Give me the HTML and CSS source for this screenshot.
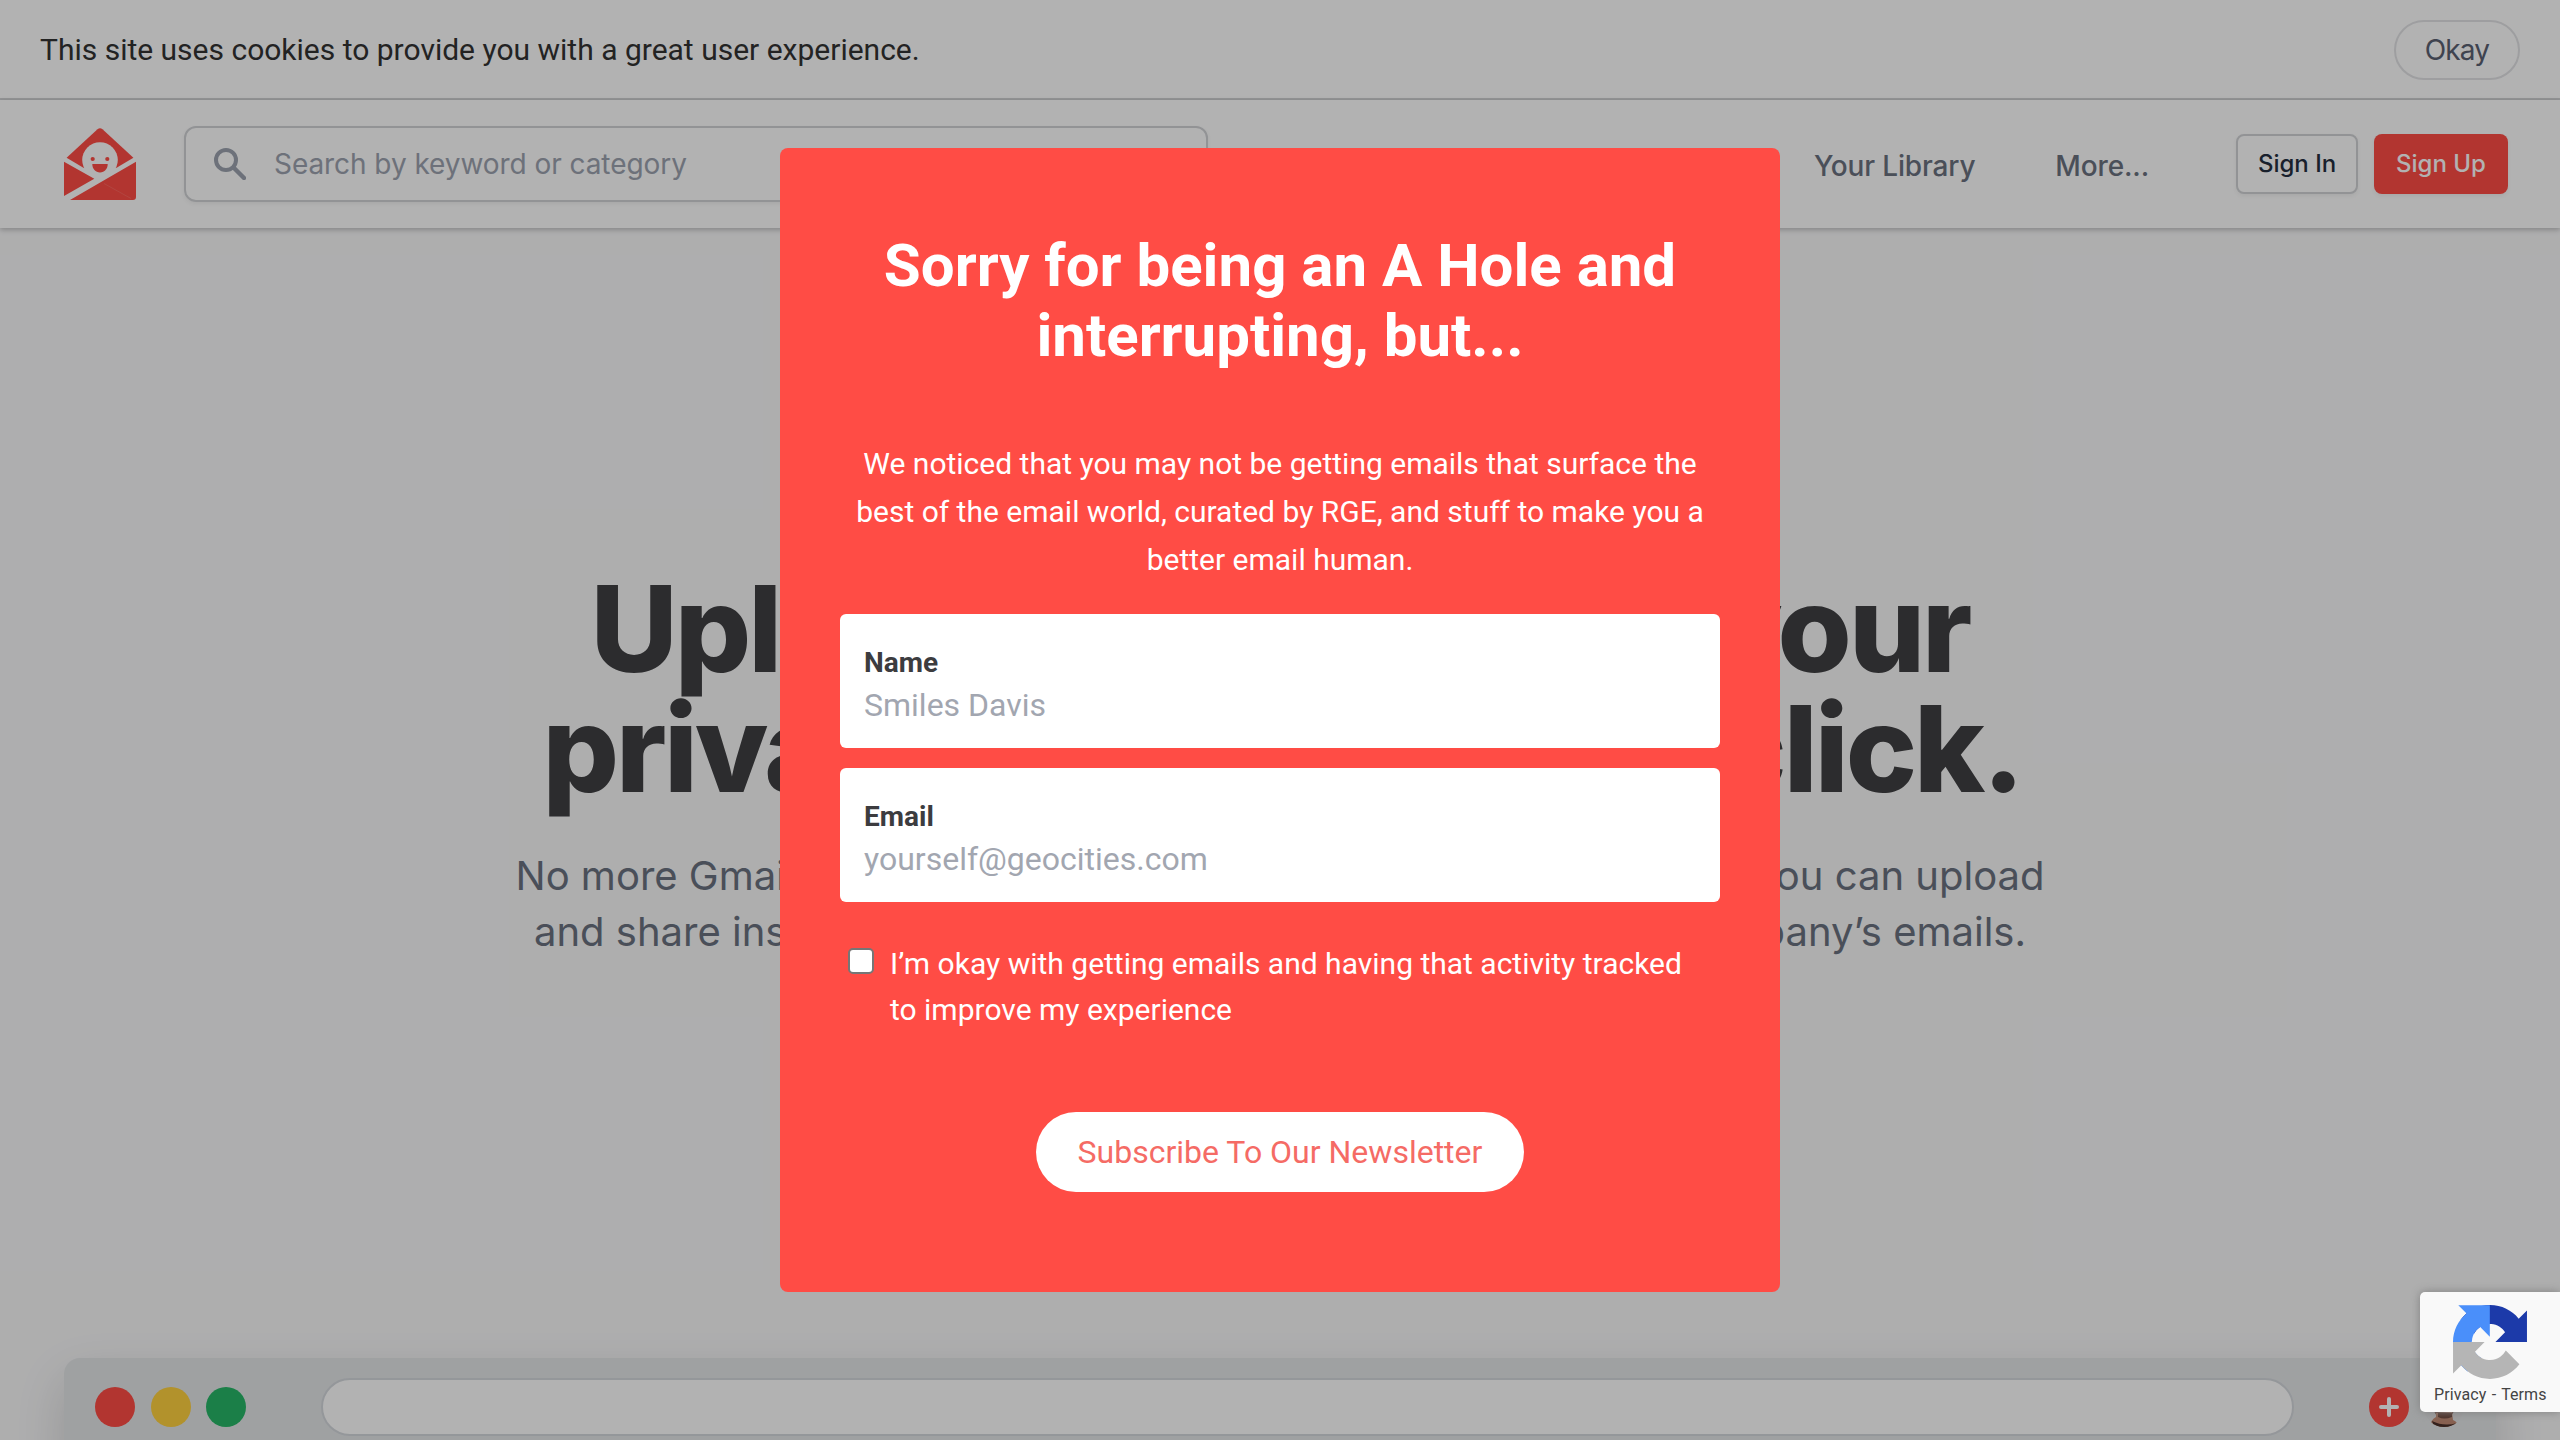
FILE: index.html
```html
<!DOCTYPE html>
<html lang="en">
<head>
<meta charset="utf-8">
<title>Really Good Emails</title>
<link rel="stylesheet" href="styles.css">
</head>
<body>
<div class="page">
  <div class="cookie-bar">
    <span class="cookie-text">This site uses cookies to provide you with a great user experience.</span>
    <button class="okay">Okay</button>
  </div>
  <header class="header">
    <svg class="logo" viewBox="0 0 72 72">
      <path d="M33.5 1.3Q36 -.9 38.5 1.3L69.4 29.7 52.6 39.8 36 44 19.4 39.8 2.6 29.7Z" fill="#ff4c45"/>
      <circle cx="36" cy="32" r="17.8" fill="#fff"/>
      <path d="M0 33.7 30.3 50.8 0 68ZM72 33.7V69Q72 72 69 72H6Z" fill="#ff4c45"/>
      <path d="M40 55.5 67 70.5" stroke="#ff7a72" stroke-width=".5" fill="none"/>
      <circle cx="28.7" cy="31" r="2.1" fill="#ff4c45"/>
      <circle cx="43.3" cy="31" r="2.1" fill="#ff4c45"/>
      <path d="M28.3 36H43.7C43.7 41 40.5 44.4 36 44.4S28.3 41 28.3 36Z" fill="#ff4c45"/>
    </svg>
    <div class="search">
      <svg class="search-icon" viewBox="0 0 32 32"><circle cx="12" cy="12" r="10" fill="none" stroke="#9ca3af" stroke-width="4"/><path d="M19.5 19.5 30 30" stroke="#9ca3af" stroke-width="4.4" stroke-linecap="round"/></svg>
      <span class="search-text">Search by keyword or category</span>
    </div>
    <nav class="nav">
      <a class="nav-link library">Your Library</a>
      <a class="nav-link more">More...</a>
      <button class="btn sign-in">Sign In</button>
      <button class="btn sign-up">Sign Up</button>
    </nav>
  </header>
  <main class="hero">
    <h1 class="hero-title"><span class="title-a"><span>Upload</span><span>your</span></span><span class="title-b"><span>private</span><span>click.</span></span></h1>
    <p class="hero-sub"><span class="sub-a"><span>No more Gmail</span><span>you can upload</span></span><span class="sub-b"><span>and share inspiration</span><span>company’s emails.</span></span></p>
  </main>
  <section class="browser">
    <div class="dots"><i class="dot red"></i><i class="dot yellow"></i><i class="dot green"></i></div>
    <div class="address"></div>
    <svg class="plus" viewBox="0 0 40 40"><circle cx="20" cy="20" r="20" fill="#ff4c45"/><path d="M20 12V28M12 20H28" stroke="#fff" stroke-width="4" stroke-linecap="round"/></svg>
    <svg class="avatar" viewBox="0 0 40 40"><clipPath id="face"><circle cx="20" cy="20" r="20"/></clipPath><g clip-path="url(#face)"><rect width="40" height="40" fill="#e2e4e6"/><ellipse cx="20" cy="18" rx="11" ry="14" fill="#7a5246"/><path d="M12 26 28 25 29 33Q34 35 35 40H6Q7 32 12 30Z" fill="#c28a73"/><path d="M14 26H28V30Q20 33 14 30Z" fill="#6b4337"/><path d="M8 34Q20 40 33 36L31 40H10Z" fill="#4a302a"/></g></svg>
  </section>
</div>
<div class="overlay">
  <form class="modal">
    <h2 class="modal-title">Sorry for being an A Hole and<br>interrupting, but...</h2>
    <p class="modal-text">We noticed that you may not be getting emails that surface the<br>best of the email world, curated by RGE, and stuff to make you a<br>better email human.</p>
    <div class="field"><label class="label">Name</label><span class="placeholder">Smiles Davis</span></div>
    <div class="field"><label class="label">Email</label><span class="placeholder">yourself@geocities.com</span></div>
    <div class="consent"><span class="checkbox"></span><span class="consent-text">I’m okay with getting emails and having that activity tracked<br>to improve my experience</span></div>
    <button class="subscribe">Subscribe To Our Newsletter</button>
  </form>
</div>
<aside class="recaptcha">
  <svg class="recaptcha-logo" viewBox="0 0 64 64"><path fill="#1c3aa9" d="M64 31.955l-.033-1.37V4.687l-7.16 7.16C50.948 4.674 42.033.093 32.05.093c-10.4 0-19.622 4.96-25.458 12.64l11.736 11.86a15.55 15.55 0 0 1 4.754-5.334c2.05-1.6 4.952-2.906 8.968-2.906.485 0 .86.057 1.135.163 4.976.393 9.288 3.14 11.828 7.124l-8.307 8.307L64 31.953"/><path fill="#4a8ffa" d="M31.862.094l-1.37.033H4.594l7.16 7.16C4.58 13.147 0 22.06 0 32.046c0 10.4 4.96 19.622 12.64 25.458L24.5 45.768a15.55 15.55 0 0 1-5.334-4.754c-1.6-2.05-2.906-4.952-2.906-8.968 0-.485.057-.86.163-1.135.393-4.976 3.14-9.288 7.124-11.828l8.307 8.307L31.86.095"/><path fill="#b5b5b5" d="M.001 32.045l.033 1.37v25.898l7.16-7.16c5.86 7.173 14.774 11.754 24.76 11.754 10.4 0 19.622-4.96 25.458-12.64l-11.736-11.86a15.55 15.55 0 0 1-4.754 5.334c-2.05 1.6-4.952 2.906-8.968 2.906-.485 0-.86-.057-1.135-.163-4.976-.393-9.288-3.14-11.828-7.124l8.307-8.307c-10.522.04-22.4.066-27.295-.005"/></svg>
  <span class="recaptcha-links">Privacy - Terms</span>
</aside>
</body>
</html>
```
FILE: styles.css
```css
* { box-sizing: border-box; margin: 0; }
body { width: 2560px; height: 1440px; overflow: hidden; position: relative; background: #f9f9fa; font-family: Inter, "Liberation Sans", sans-serif; }
button { font-family: inherit; padding: 0; }
.page { height: 1440px; overflow: hidden; display: flex; flex-direction: column; }

.cookie-bar { flex: none; height: 100px; padding: 0 40px; display: flex; align-items: center; justify-content: space-between; background: #fff; border-bottom: 2px solid #d2d3d5; }
.cookie-text { font: 400 30px/46px Roboto, sans-serif; color: #333; white-space: nowrap; padding-top: 2px; }
.okay { width: 126px; height: 60px; margin-top: 2px; border: 2px solid #e2e3e6; border-radius: 30px; background: #fff; font-size: 28px; letter-spacing: -.8px; color: #5a6072; }

.header { flex: none; height: 128px; padding: 26px 52px 0 64px; display: flex; align-items: flex-start; background: #fff; box-shadow: 0 2px 6px rgba(0,0,0,.14), 0 2px 4px rgba(0,0,0,.1); }
.logo { width: 72px; height: 72px; margin: 2px 48px 0 0; }
.search { width: 1024px; height: 76px; padding-left: 28px; display: flex; align-items: center; border: 2px solid #d1d3d6; border-radius: 12px; box-shadow: 0 2px 4px rgba(0,0,0,.06); }
.search-icon { width: 32px; height: 32px; margin-right: 28px; }
.search-text { font-size: 28px; letter-spacing: -.06px; color: #9ca3af; }
.nav { flex: 1; display: flex; align-items: center; justify-content: flex-end; height: 76px; }
.nav-link { font-weight: 500; font-size: 28px; letter-spacing: -.15px; color: #6b7280; white-space: nowrap; padding-top: 3px; }
.library { margin-right: 80px; }
.more { margin-right: 87px; }
.btn { height: 60px; padding-bottom: 2px; border: 0; border-radius: 8px; font-weight: 500; font-size: 24px; box-shadow: 0 2px 4px rgba(0,0,0,.06); }
.sign-in { width: 122px; margin-right: 16px; border: 2px solid #d1d3d6; background: #fff; color: #252f3f; }
.sign-up { width: 134px; background: #ff4c45; color: #fff; }

.hero { flex: none; height: 1130px; padding-top: 341px; display: flex; flex-direction: column; align-items: center; }
.hero-title { font-weight: 800; font-size: 120px; line-height: 120px; letter-spacing: -3px; color: #404042; display: flex; flex-direction: column; align-items: center; }
.hero-sub { margin-top: 39px; font-size: 40px; line-height: 56px; color: #6b7280; display: flex; flex-direction: column; align-items: center; }
.title-a, .title-b, .sub-a, .sub-b { display: flex; justify-content: space-between; white-space: nowrap; }
.title-a { width: 1379px; }
.title-b { width: 1479px; margin-left: 4px; }
.sub-a { width: 1529px; }
.sub-b { width: 1492px; }

.browser { flex: none; height: 200px; margin: 0 64px; padding: 20px 32px 0 31px; display: flex; align-items: flex-start; background: #e4e7e9; border-radius: 16px 16px 0 0; box-shadow: 0 20px 50px rgba(0,0,0,.14); }
.dots { display: flex; gap: 15.5px; margin: 9px 75px 0 0; }
.dot { width: 40px; height: 40px; border-radius: 50%; }
.red { background: #ff4c45; }
.yellow { background: #ffd140; }
.green { background: #27b767; }
.address { width: 1973px; height: 58px; background: #fff; border: 2px solid #d5d8dd; border-radius: 29px; }
.plus { width: 40px; height: 40px; margin: 9px 15px 0 75px; }
.avatar { width: 40px; height: 40px; margin-top: 9px; }

.overlay { position: absolute; inset: 0; display: flex; align-items: center; justify-content: center; background: rgba(0,0,0,.3); }
.modal { width: 1000px; height: 1144px; padding: 83px 60px 0; display: flex; flex-direction: column; align-items: center; background: #ff4c45; border-radius: 8px; color: #fff; font-family: Roboto, "Liberation Sans", sans-serif; white-space: nowrap; }
.modal-title { font-weight: 700; font-size: 60px; line-height: 70px; text-align: center; }
.modal-text { margin: 69px 0 30px; font-size: 30px; line-height: 48px; text-align: center; }
.field { width: 880px; height: 134px; margin-bottom: 20px; padding: 29px 24px 0; background: #fff; border-radius: 6px; display: flex; flex-direction: column; }
.label { font-weight: 700; font-size: 28px; line-height: 40px; color: #3c3c3f; }
.placeholder { font-size: 32px; line-height: 44px; color: #a2a6b0; }
.consent { align-self: flex-start; display: flex; margin: 19px 0 0 8px; font-size: 30px; line-height: 46px; }
.checkbox { width: 26px; height: 26px; margin: 7px 16px 0 0; border: 2px solid #767676; border-radius: 5px; background: #fff; }
.subscribe { width: 488px; height: 80px; margin-top: 79px; border: 0; border-radius: 40px; background: #fff; color: #f56b65; font-family: inherit; font-size: 32px; }

.recaptcha { position: absolute; left: 2420px; top: 1292px; width: 140px; height: 120px; padding: 13px 0 0 33px; background: #f9f9f9; border-radius: 5px 0 0 5px; box-shadow: 0 0 10px gray; display: flex; flex-direction: column; gap: 6px; }
.recaptcha-logo { width: 74px; height: 74px; flex: none; }
.recaptcha-links { margin-left: -19px; font: 400 16px/20px Roboto, sans-serif; letter-spacing: .1px; word-spacing: 1.2px; color: #444; white-space: nowrap; }
```
